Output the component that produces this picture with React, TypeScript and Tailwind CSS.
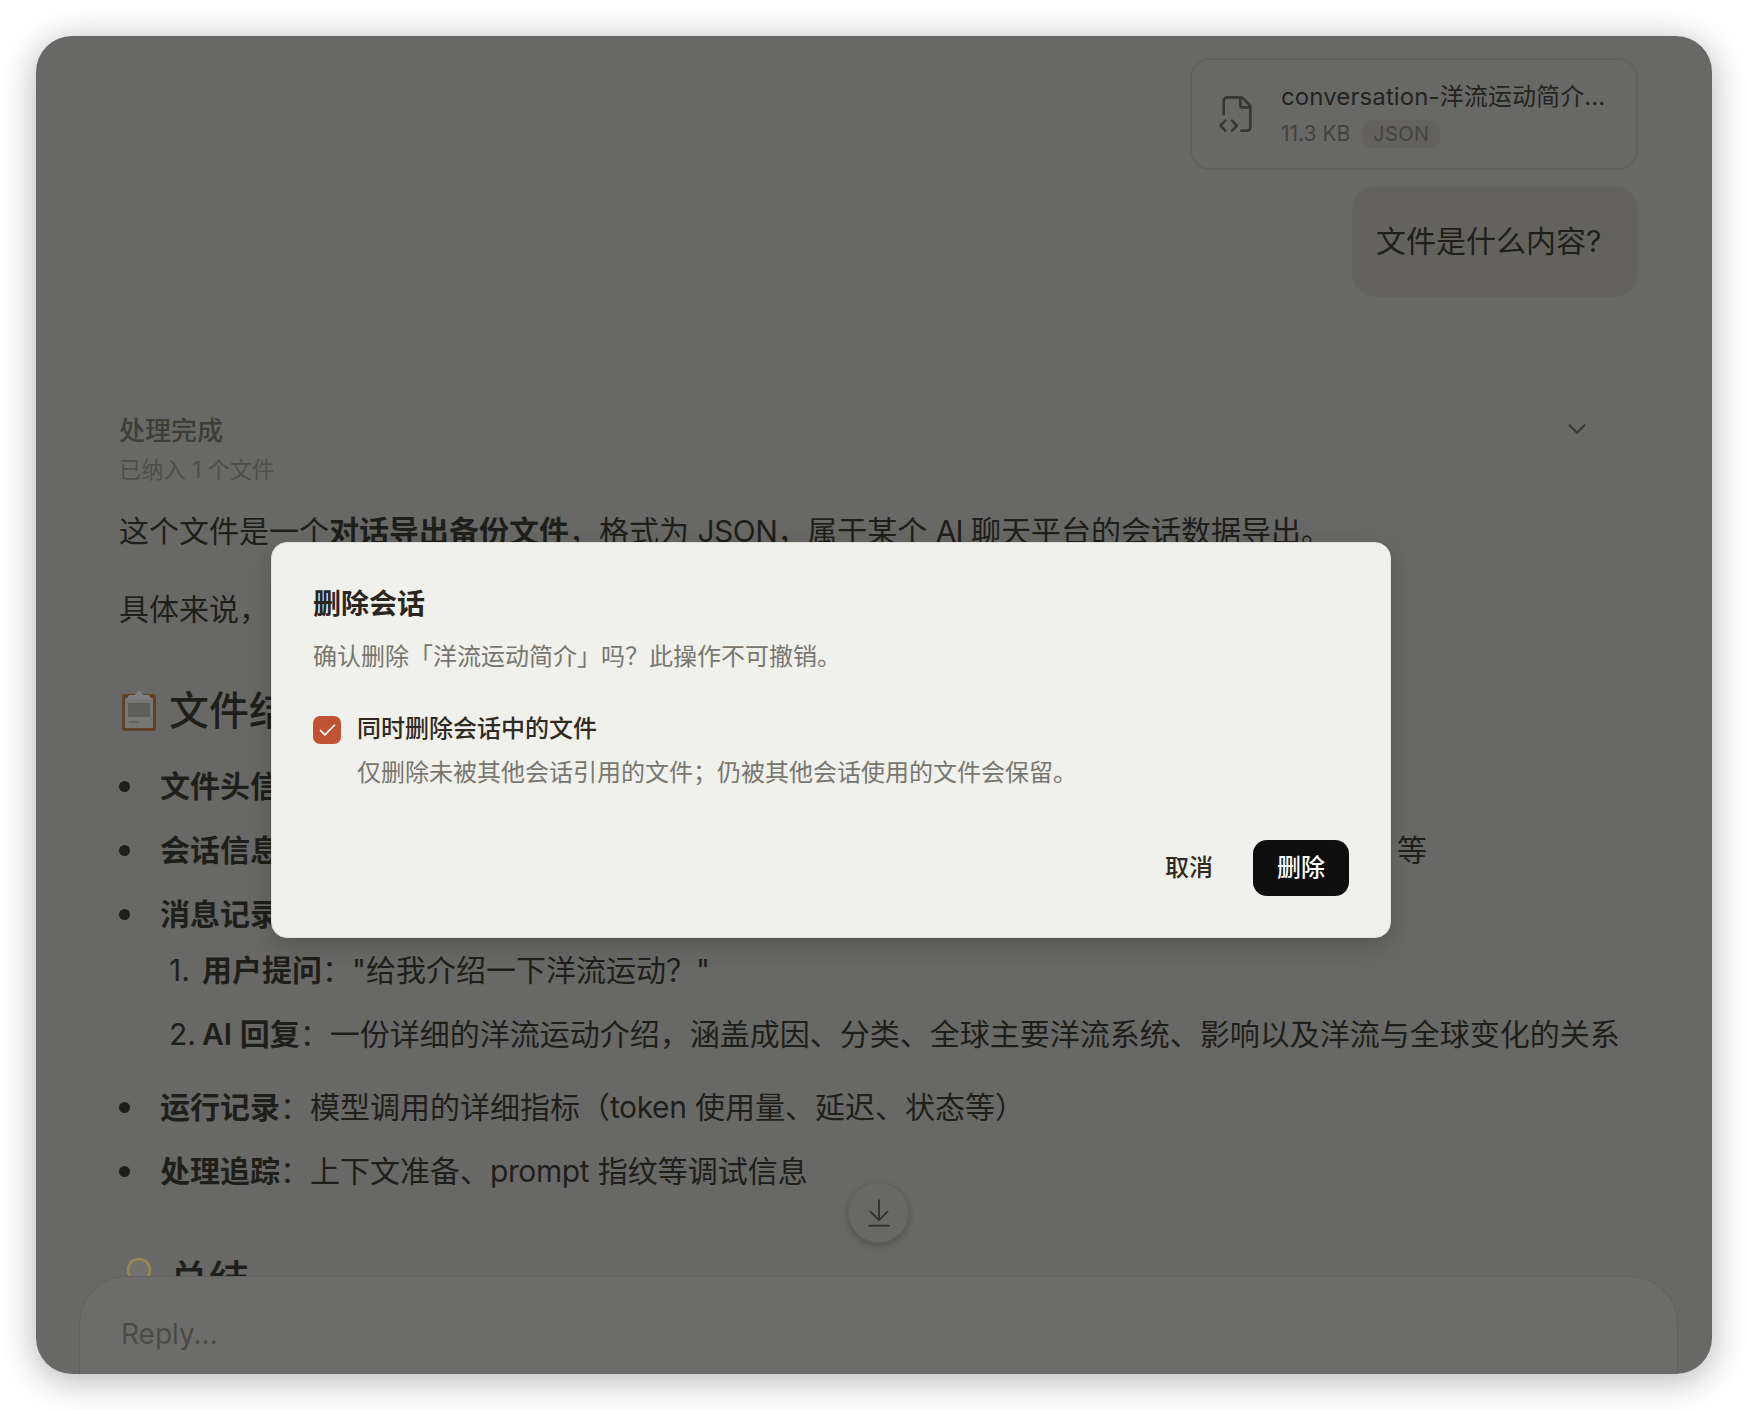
import { ArrowDownToLine, Check, ChevronDown, FileCode2 } from "lucide-react";

// emoji sit above the dim layer, their colours are the dimmed ones
const Clipboard = () => (
  <svg width="36" height="42" viewBox="0 0 36 42" className="relative z-10 shrink-0">
    <rect x="1" y="4" width="34" height="37" rx="3" fill="#5f4126" />
    <rect x="4" y="8" width="28" height="30" fill="#767674" />
    <rect x="7" y="13" width="22" height="14" fill="#5e5e5d" />
    <rect x="8" y="31" width="10" height="2" fill="#646463" />
    <path d="M6 9 L8 5 H14 L18 0 L22 5 H28 L30 9 Z" fill="#7e8183" />
  </svg>
);

const Bulb = () => (
  <svg width="26" height="36" viewBox="0 0 26 36" className="relative z-10 shrink-0">
    <circle cx="13" cy="13" r="11" fill="#72726e" stroke="#97894f" strokeWidth="2.5" />
  </svg>
);

const Bullet = ({ children }: { children: React.ReactNode }) => (
  <div className="flex items-center h-12 text-[30px] leading-[48px] whitespace-nowrap">
    <span className="w-[11px] h-[11px] rounded-full bg-[#1f1e1a] mr-[30px]" />
    {children}
  </div>
);

export default function App() {
  return (
    <div className="h-[1410px] w-full bg-white p-[36px] font-['Inter','Noto_Sans_CJK_SC',sans-serif] text-[#1f1e1a] overflow-hidden">
      <div className="relative flex flex-col h-full rounded-[36px] overflow-hidden bg-[#f4f4f4] shadow-[0_6px_36px_rgba(0,0,0,0.3)]">
        {/* Chat */}
        <div className="flex-1 min-h-0 overflow-hidden pt-[22px] pl-[83px] pr-[74px]">
          <div className="flex flex-col items-end gap-[16px]">
            <div className="flex items-center w-[448px] h-[112px] rounded-[20px] border-2 border-[#dbdbd8] pl-[25px]">
              <FileCode2 size={40} strokeWidth={1.6} className="text-[#62625e] shrink-0" />
              <div className="ml-[24px] min-w-0">
                <div className="text-[24px] leading-[34px] tracking-[0.1px] whitespace-nowrap text-[#2e2e2a] mt-[1px]">conversation-洋流运动简介...</div>
                <div className="flex items-center mt-[4px]">
                  <span className="text-[21px] text-[#85857f]">11.3 KB</span>
                  <span className="flex items-center justify-center w-[78px] h-[28px] ml-[12px] rounded-[10px] bg-[#e4e2d8] text-[20px] tracking-[0.5px] text-[#8f8f89]">JSON</span>
                </div>
              </div>
            </div>
            <div className="flex items-center w-[286px] h-[111px] pl-[24px] rounded-[24px] bg-[#e4e2d8] text-[30px]">文件是什么内容?</div>
          </div>

          <div className="flex justify-between mt-[116px] pr-[46px]">
            <div className="text-[26px] leading-[36px] font-medium text-[#767671]">处理完成</div>
            <ChevronDown size={30} strokeWidth={1.7} className="text-[#62625e] mt-[1px]" />
          </div>
          <div className="text-[22.3px] leading-[30px] mt-[6px] text-[#a8a8a3]">已纳入 1 个文件</div>

          <p className="text-[30px] leading-[48px] mt-[22px] whitespace-nowrap">这个文件是一个<b className="font-semibold">对话导出备份文件</b>，格式为 <span className="tracking-[-0.5px]">JSON</span>，属于某个 <span className="tracking-[-1px]">AI</span> 聊天平台的会话数据导出。</p>
          <p className="text-[30px] leading-[48px] mt-[30px]">具体来说，</p>

          <div className="flex items-center gap-[12px] h-[60px] mt-[48px] pl-[2px] text-[40px] font-medium">
            <Clipboard />
            <span>文件结构</span>
          </div>

          <div className="flex flex-col gap-4 mt-[21px]">
            <Bullet><b className="font-semibold">文件头信息</b></Bullet>
            <Bullet>
              <b className="font-semibold">会话信息</b>
              <span className="inline-block w-[1117px]" />
              等
            </Bullet>
            <Bullet><b className="font-semibold">消息记录</b></Bullet>
          </div>

          <ol className="mt-[8px] ml-[50px] flex flex-col gap-4 text-[30px] leading-[48px] whitespace-nowrap">
            <li className="flex">
              <span className="w-[33px]">1.</span>
              <span><b className="font-semibold">用户提问</b>：&quot;给我介绍一下洋流运动？&quot;</span>
            </li>
            <li className="flex">
              <span className="w-[33px]">2.</span>
              <span><b className="font-semibold">AI 回复</b>：一份详细的洋流运动介绍，涵盖成因、分类、全球主要洋流系统、影响以及洋流与全球变化的关系</span>
            </li>
          </ol>

          <div className="flex flex-col gap-4 mt-[25px]">
            <Bullet><span><b className="font-semibold">运行记录</b>：模型调用的详细指标（<span className="tracking-[-0.4px]">token</span> 使用量、延迟、状态等）</span></Bullet>
            <Bullet><span><b className="font-semibold">处理追踪</b>：上下文准备、<span className="tracking-[-0.4px]">prompt</span> 指纹等调试信息</span></Bullet>
          </div>

          <div className="flex items-start gap-[17px] mt-[62px] pl-[7px] text-[40px] leading-[46px] font-medium">
            <Bulb />
            <span>总结</span>
          </div>
        </div>

        {/* Reply box */}
        <div className="shrink-0 h-[98px] ml-[43px] mr-[34px] pl-[41px] pt-[35px] rounded-t-[48px] border border-b-0 border-[#dedede] bg-white text-[28px] leading-[44px] text-[#9e9e9b]">
          Reply...
        </div>

        {/* Scroll to bottom */}
        <div className="absolute left-[812px] top-[1146px] flex items-center justify-center w-[61px] h-[61px] rounded-full bg-[#f4f4f4] border border-[#dedede] shadow-[0_3px_8px_rgba(0,0,0,0.28)]">
          <ArrowDownToLine size={34} strokeWidth={1.4} className="text-[#5c5c58]" />
        </div>

        {/* Dialog */}
        <div className="absolute inset-0 bg-[#1e1e1c]/[.656] pl-[235px] pt-[506px]">
          <div className="w-[1120px] h-[396px] rounded-[16px] border border-[#e2e1db] bg-[#f0f0ec] pt-[43px] px-[41px] shadow-[0_8px_24px_rgba(0,0,0,0.18)]">
            <h2 className="text-[28px] leading-[36px] font-semibold text-[#2a261e]">删除会话</h2>
            <p className="text-[24px] leading-[36px] mt-[17px] text-[#77766f]">确认删除「洋流运动简介」吗？此操作不可撤销。</p>
            <div className="flex mt-[36px]">
              <div className="flex items-center justify-center w-[28px] h-[28px] mt-[5px] rounded-[7px] bg-[#c05236] shrink-0">
                <Check size={21} strokeWidth={2} className="text-white" />
              </div>
              <div className="ml-[16px]">
                <div className="text-[24px] leading-[36px] font-medium text-[#2f2b22]">同时删除会话中的文件</div>
                <div className="text-[24px] leading-[36px] mt-[8px] text-[#77766f]">仅删除未被其他会话引用的文件；仍被其他会话使用的文件会保留。</div>
              </div>
            </div>
            <div className="flex justify-end gap-4 mt-[49px] text-[24px] font-medium">
              <button className="w-[96px] h-[56px] rounded-[14px] text-[#2f2b22]">取消</button>
              <button className="w-[96px] h-[56px] rounded-[14px] bg-[#0f0f0f] text-white">删除</button>
            </div>
          </div>
        </div>
      </div>
    </div>
  );
}
